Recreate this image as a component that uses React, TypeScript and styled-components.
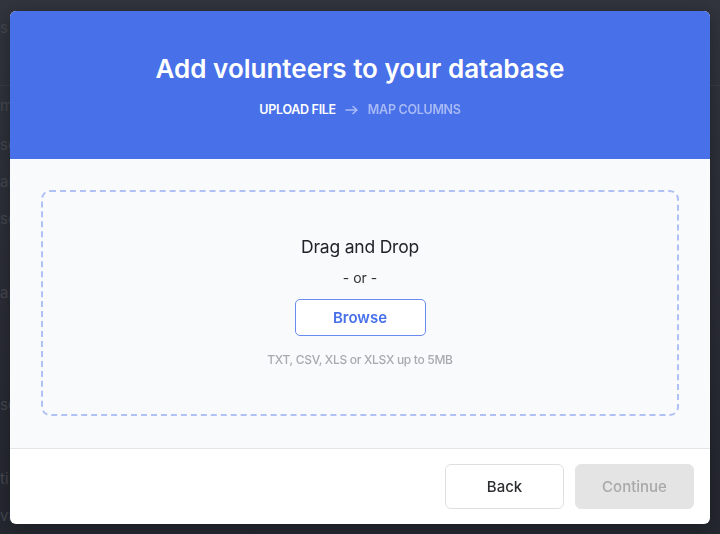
import React from "react";
import styled, { createGlobalStyle } from "styled-components";

const Global = createGlobalStyle`
  html, body { margin: 0; padding: 0; }
  body {
    width: 720px;
    height: 534px;
    overflow: hidden;
    background: #2b2d36;
    font-family: Inter, "Noto Sans", "Liberation Sans", sans-serif;
  }
`;

const Page = styled.div`
  width: 720px;
  height: 534px;
  overflow: hidden;
  background: linear-gradient(#32353e, #262831);
  display: flex;
  flex-direction: column;
  padding-top: 16px;
  box-sizing: border-box;
`;

const BgRow = styled.div<{ $h: number; $line?: boolean }>`
  height: ${(p) => p.$h}px;
  display: flex;
  align-items: center;
  color: #454852;
  font-size: 15px;
  white-space: nowrap;
  padding-left: 0;
  border-bottom: ${(p) => (p.$line ? "1px solid #3a3d46" : "none")};
  box-sizing: border-box;
`;

const Overlay = styled.div`
  position: fixed;
  inset: 0;
  display: flex;
  align-items: flex-start;
  justify-content: center;
  padding-top: 11px;
`;

const Modal = styled.div`
  width: 700px;
  height: 513px;
  border-radius: 6px;
  overflow: hidden;
  background: #fff;
  display: flex;
  flex-direction: column;
  box-shadow: 0 4px 20px rgba(0, 0, 0, 0.35);
`;

const Header = styled.div`
  height: 148px;
  background: #4870e8;
  display: flex;
  flex-direction: column;
  align-items: center;
  padding-top: 42px;
  box-sizing: border-box;
`;

const Title = styled.h1`
  margin: 0;
  color: #fff;
  font-size: 26px;
  font-weight: 600;
  line-height: 32px;
  letter-spacing: 0;
`;

const Steps = styled.div`
  margin-top: 17px;
  display: flex;
  align-items: center;
  gap: 9px;
  font-size: 12.5px;
  font-weight: 600;
  letter-spacing: -0.3px;
`;

const Step = styled.span<{ $active?: boolean }>`
  color: ${(p) => (p.$active ? "#ffffff" : "#a8baf5")};
`;

const Body = styled.div`
  flex: 1;
  background: #f9fafc;
  padding: 31px 31px 32px;
  border-bottom: 1px solid #e4e5e8;
  display: flex;
`;

const DropZone = styled.div`
  flex: 1;
  border: 2px dashed #b0c1f6;
  border-radius: 9px;
  display: flex;
  flex-direction: column;
  align-items: center;
  padding-top: 43px;
  box-sizing: border-box;
`;

const DropTitle = styled.div`
  font-size: 17.5px;
  color: #222328;
  line-height: 24px;
  font-weight: 400;
  letter-spacing: -0.2px;
`;

const Or = styled.div`
  margin-top: 10px;
  font-size: 14px;
  color: #333;
  line-height: 18px;
`;

const BrowseButton = styled.button`
  margin-top: 12px;
  width: 131px;
  height: 37px;
  border: 1px solid #6a8cef;
  border-radius: 5px;
  background: #fff;
  color: #4870e8;
  font-family: inherit;
  font-size: 15px;
  font-weight: 600;
  cursor: pointer;
`;

const Hint = styled.div`
  margin-top: 16px;
  font-size: 12px;
  color: #a9a9ae;
  font-weight: 500;
  letter-spacing: -0.3px;
`;

const Footer = styled.div`
  height: 75px;
  display: flex;
  align-items: center;
  justify-content: flex-end;
  gap: 11px;
  padding-right: 16px;
  box-sizing: border-box;
`;

const FooterButton = styled.button<{ $disabled?: boolean }>`
  width: 119px;
  height: 45px;
  border-radius: 6px;
  font-family: inherit;
  font-size: 15px;
  font-weight: 500;
  border: 1px solid ${(p) => (p.$disabled ? "#e4e4e4" : "#dedfe2")};
  background: ${(p) => (p.$disabled ? "#e4e4e4" : "#fff")};
  color: ${(p) => (p.$disabled ? "#a8a8a8" : "#2c2d31")};
`;

const bgRows: { h: number; t: string; line?: boolean }[] = [
  { h: 24, t: "s" },
  { h: 48, t: "", line: true },
  { h: 40, t: "m" },
  { h: 38, t: "sc" },
  { h: 38, t: "ar" },
  { h: 38, t: "sc" },
  { h: 38, t: "" },
  { h: 38, t: "az" },
  { h: 38, t: "" },
  { h: 38, t: "" },
  { h: 38, t: "sc" },
  { h: 38, t: "" },
  { h: 38, t: "ti" },
  { h: 38, t: "vicio" },
];

export default function App() {
  return (
    <>
      <Global />
      <Page>
        {bgRows.map((r, i) => (
          <BgRow key={i} $h={r.h} $line={r.line}>
            {r.t}
          </BgRow>
        ))}
      </Page>
      <Overlay>
        <Modal>
          <Header>
            <Title>Add volunteers to your database</Title>
            <Steps>
              <Step $active>UPLOAD FILE</Step>
              <svg width="14" height="10" viewBox="0 0 14 10" fill="none">
                <path
                  d="M1 5h11M8 1.5L12 5 8 8.5"
                  stroke="#a8baf5"
                  strokeWidth="1.6"
                  strokeLinecap="round"
                  strokeLinejoin="round"
                />
              </svg>
              <Step>MAP COLUMNS</Step>
            </Steps>
          </Header>
          <Body>
            <DropZone>
              <DropTitle>Drag and Drop</DropTitle>
              <Or>- or -</Or>
              <BrowseButton>Browse</BrowseButton>
              <Hint>TXT, CSV, XLS or XLSX up to 5MB</Hint>
            </DropZone>
          </Body>
          <Footer>
            <FooterButton>Back</FooterButton>
            <FooterButton $disabled>Continue</FooterButton>
          </Footer>
        </Modal>
      </Overlay>
    </>
  );
}
